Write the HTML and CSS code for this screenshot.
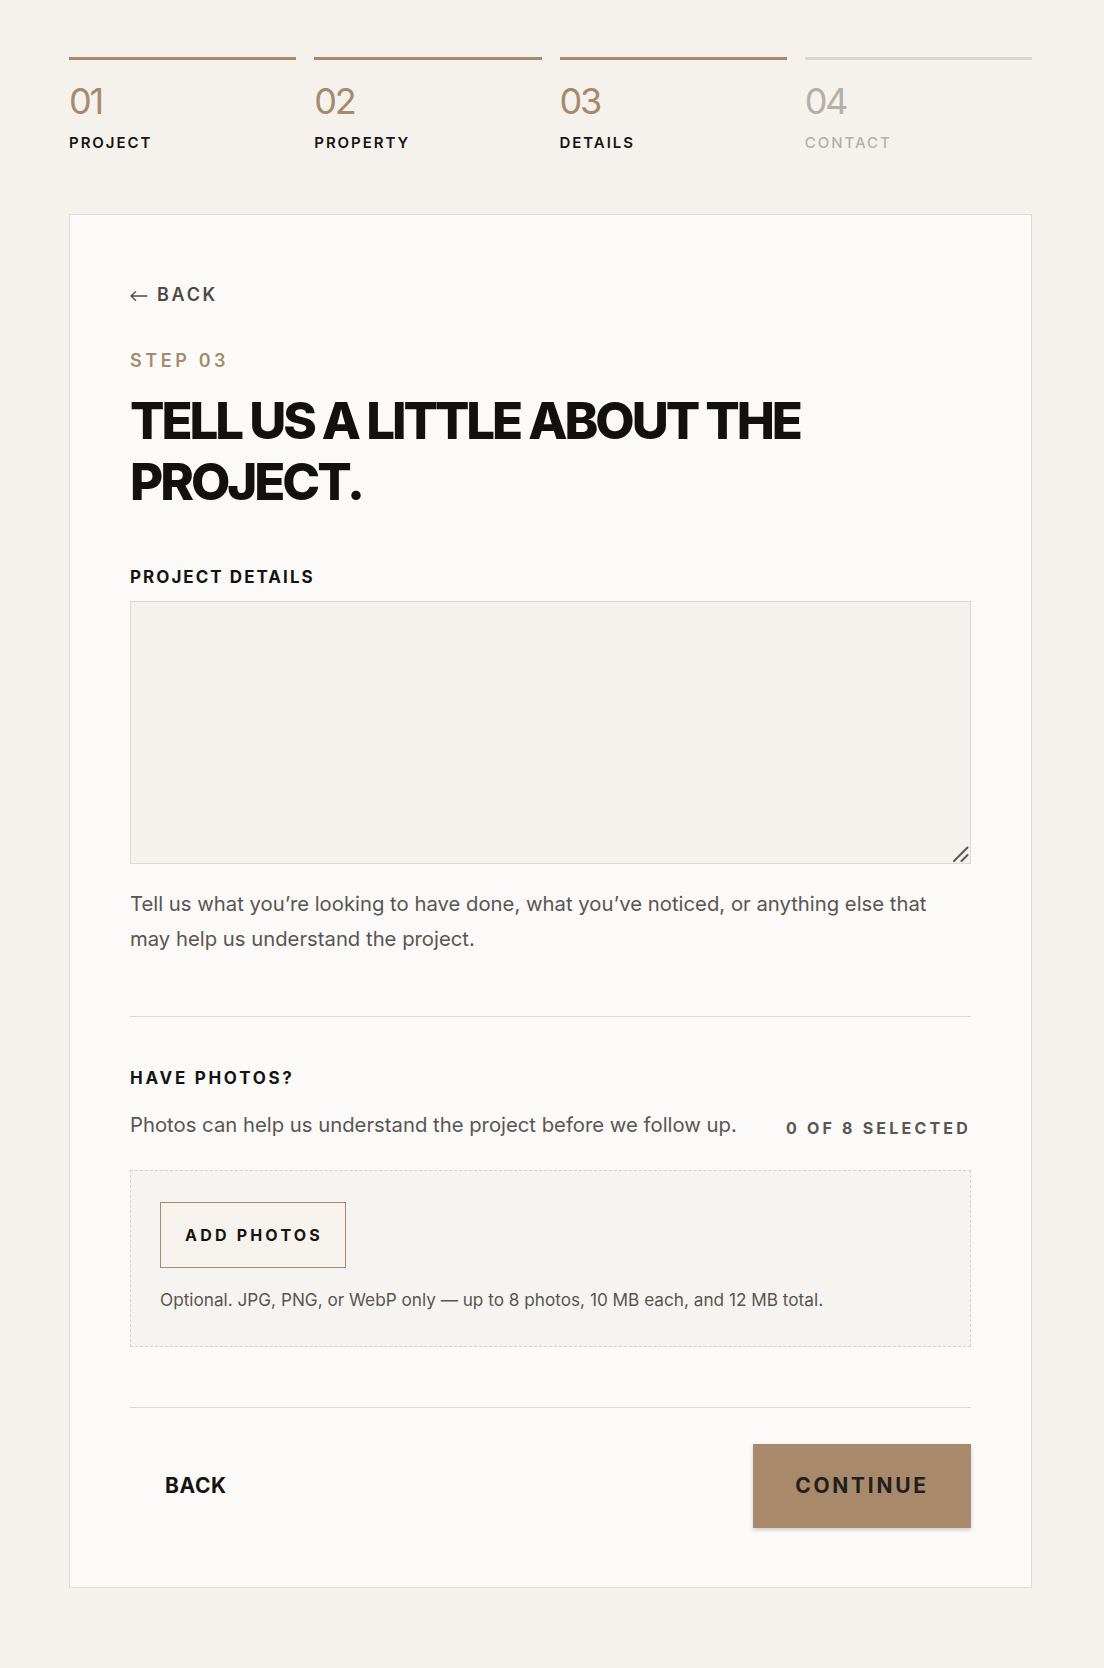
FILE: index.html
```html
<!DOCTYPE html>
<html lang="en">
<head>
<meta charset="utf-8">
<title>Project details</title>
<link rel="stylesheet" href="styles.css">
</head>
<body>
<div class="page">
  <ol class="steps">
    <li class="step done"><span class="step-num">01</span><span class="step-label">Project</span></li>
    <li class="step done"><span class="step-num">02</span><span class="step-label">Property</span></li>
    <li class="step done"><span class="step-num">03</span><span class="step-label">Details</span></li>
    <li class="step todo"><span class="step-num">04</span><span class="step-label">Contact</span></li>
  </ol>

  <main class="card">
    <a class="back-link" href="#">
      <svg class="arrow" width="18" height="10" viewBox="0 0 18 10" aria-hidden="true">
        <path d="M1 5 H17 M5.5 0.8 L1 5 L5.5 9.2" />
      </svg>
      <span>Back</span>
    </a>
    <p class="eyebrow">Step 03</p>
    <h1 class="title">Tell us a little about the project.</h1>

    <section class="field">
      <label class="field-label" for="details">Project details</label>
      <div class="textarea-wrap">
        <textarea id="details" class="textarea"></textarea>
        <svg class="grip" width="16" height="16" viewBox="0 0 16 16" aria-hidden="true">
          <line x1="1" y1="15" x2="14.5" y2="1.5" />
          <line x1="8.5" y1="15" x2="14.5" y2="9" />
        </svg>
      </div>
      <p class="help">Tell us what you’re looking to have done, what you’ve noticed, or anything else that may help us understand the project.</p>
    </section>

    <hr class="rule rule-a">

    <section class="photos">
      <h2 class="field-label">Have photos?</h2>
      <div class="photos-row">
        <p class="photos-desc">Photos can help us understand the project before we follow up.</p>
        <span class="count">0 of 8 selected</span>
      </div>
      <div class="drop">
        <button class="add-btn" type="button">Add photos</button>
        <p class="drop-note">Optional. JPG, PNG, or WebP only — up to 8 photos, 10 MB each, and 12 MB total.</p>
      </div>
    </section>

    <hr class="rule rule-b">

    <div class="actions">
      <button class="btn-back" type="button">Back</button>
      <button class="btn-continue" type="button">Continue</button>
    </div>
  </main>
</div>
</body>
</html>
```
FILE: styles.css
```css
* { box-sizing: border-box; }

html, body {
  margin: 0;
  padding: 0;
  background: #f5f2ee;
  font-family: "Inter", "Noto Sans", sans-serif;
  color: #161412;
}

.page {
  width: 963px;
  margin: 0 0 0 69px;
  padding: 57px 0 76px;
}

/* progress steps */
.steps {
  list-style: none;
  margin: 0;
  padding: 0;
  display: grid;
  grid-template-columns: repeat(4, 1fr);
  column-gap: 18px;
}

.step {
  display: flex;
  flex-direction: column;
  border-top: 3px solid #a78a6d;
}

.step.todo { border-top-color: #dbd8d3; }

.step-num {
  margin-top: 23px;
  font-size: 36px;
  line-height: 36px;
  font-weight: 400;
  letter-spacing: -0.06em;
  color: #a78a6d;
}

.step.todo .step-num { color: #b4afa9; }

.step-label {
  margin-top: 15px;
  font-size: 15px;
  line-height: 17px;
  font-weight: 600;
  letter-spacing: 0.13em;
  text-transform: uppercase;
  color: #161412;
}

.step.todo .step-label { color: #b4afa9; font-weight: 500; }

/* card */
.card {
  margin-top: 63px;
  background: #fbfaf8;
  border: 1px solid #e0dcd6;
  padding: 69px 60px 59px;
  display: flex;
  flex-direction: column;
}

.back-link {
  align-self: flex-start;
  display: flex;
  align-items: center;
  gap: 9px;
  font-size: 18px;
  line-height: 22px;
  font-weight: 600;
  letter-spacing: 0.15em;
  text-transform: uppercase;
  color: #4f4a45;
  text-decoration: none;
}

.back-link .arrow {
  margin-top: 2px;
}

.back-link .arrow path {
  fill: none;
  stroke: #4f4a45;
  stroke-width: 1.3;
  stroke-linecap: round;
  stroke-linejoin: round;
}

.eyebrow {
  margin: 44px 0 0;
  font-size: 18px;
  line-height: 22px;
  font-weight: 600;
  letter-spacing: 0.2em;
  text-transform: uppercase;
  color: #a78a6d;
}

.title {
  margin: 18px 0 0;
  font-size: 51px;
  line-height: 61px;
  font-weight: 800;
  letter-spacing: -0.06em;
  text-transform: uppercase;
  color: #121110;
  max-width: 720px;
}

.field {
  margin-top: 55px;
  display: flex;
  flex-direction: column;
}

.field-label {
  display: block;
  margin: 0;
  font-size: 17px;
  line-height: 20px;
  font-weight: 700;
  letter-spacing: 0.12em;
  text-transform: uppercase;
  color: #161412;
}

.photos .field-label { letter-spacing: 0.16em; }

.textarea-wrap {
  position: relative;
  margin-top: 14px;
}

.textarea {
  width: 100%;
  height: 263px;
  background: #f5f2ee;
  border: 1px solid #dcd8d2;
  border-radius: 0;
  resize: none;
  font: inherit;
  display: block;
}

.grip {
  position: absolute;
  right: 2px;
  bottom: 2px;
  pointer-events: none;
}

.grip line {
  stroke: #5a5755;
  stroke-width: 2;
  stroke-linecap: round;
}

.help {
  margin: 22px 0 0;
  max-width: 815px;
  font-size: 20.3px;
  line-height: 35px;
  color: #5a5550;
}

.rule {
  border: 0;
  border-top: 1px solid #dcd9d5;
  margin: 0;
  width: 100%;
}

.rule-a { margin-top: 60px; }

.photos {
  margin-top: 51px;
  display: flex;
  flex-direction: column;
}

.photos-row {
  margin-top: 19px;
  display: flex;
  justify-content: space-between;
  align-items: center;
  gap: 24px;
}

.photos-desc {
  margin: 0;
  font-size: 20.3px;
  line-height: 35px;
  color: #5a5550;
}

.count {
  margin-top: 7px;
  font-size: 16px;
  line-height: 20px;
  font-weight: 700;
  letter-spacing: 0.2em;
  text-transform: uppercase;
  color: #5b5651;
  white-space: nowrap;
}

.drop {
  margin-top: 28px;
  background: #f6f4f1;
  border: 1px dashed #d6d3ce;
  padding: 31px 29px 33px;
  display: flex;
  flex-direction: column;
  align-items: flex-start;
}

.add-btn {
  background: #f6f2ed;
  border: 1px solid #a78a6d;
  border-radius: 0;
  padding: 23px 22px 22px 24px;
  font-family: inherit;
  font-size: 16px;
  line-height: 19px;
  font-weight: 700;
  letter-spacing: 0.2em;
  text-transform: uppercase;
  color: #161412;
  cursor: pointer;
}

.drop-note {
  margin: 19px 0 0;
  font-size: 17.2px;
  line-height: 26px;
  color: #5a5550;
}

.rule-b { margin-top: 60px; }

.actions {
  margin-top: 36px;
  display: flex;
  justify-content: space-between;
  align-items: center;
}

.btn-back {
  background: transparent;
  border: 0;
  padding: 0 0 0 35px;
  font-family: inherit;
  font-size: 21px;
  line-height: 24px;
  font-weight: 700;
  letter-spacing: 0.03em;
  text-transform: uppercase;
  color: #161412;
  cursor: pointer;
}

.btn-continue {
  width: 218px;
  height: 84px;
  background: #a8896c;
  border: 0;
  border-radius: 0;
  box-shadow: 0 2px 4px rgba(0, 0, 0, 0.18);
  font-family: inherit;
  font-size: 21px;
  line-height: 24px;
  font-weight: 700;
  letter-spacing: 0.13em;
  text-transform: uppercase;
  color: #221e1a;
  cursor: pointer;
}
```
